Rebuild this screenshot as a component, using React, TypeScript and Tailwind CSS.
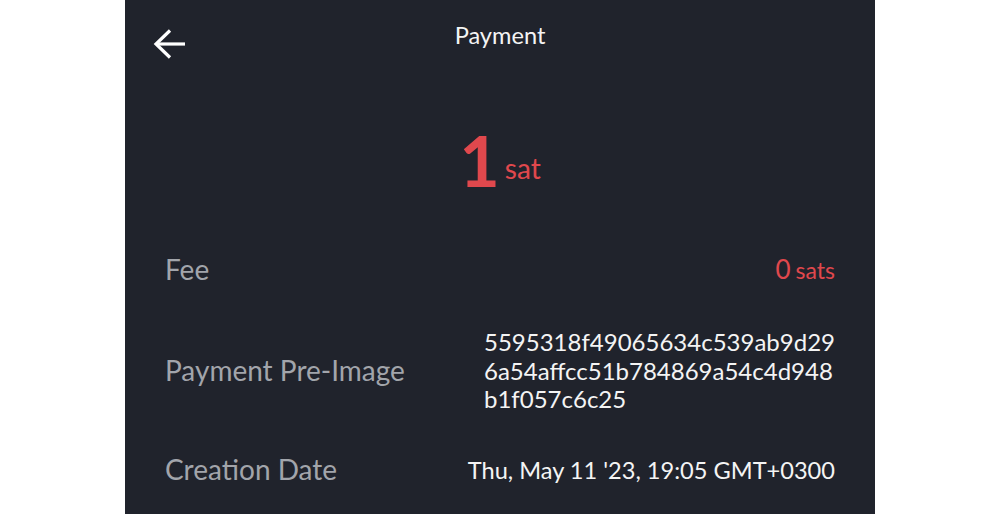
import React from "react";

const PREIMAGE = "5595318f49065634c539ab9d296a54affcc51b784869a54c4d948b1f057c6c25";

function BackArrow() {
  return (
    <svg width="32" height="30" viewBox="0 0 32 30" fill="none">
      <path d="M32 15H3" stroke="#fff" strokeWidth="3.2" />
      <path d="M17 1.5L3 15l14 13.5" stroke="#fff" strokeWidth="3.2" />
    </svg>
  );
}

function PaymentDetails() {
  return (
    <div className="min-h-screen bg-white font-['Lato',sans-serif]">
      <div className="mx-auto w-[750px] min-h-[514px] bg-[#20232c] text-[#f4f4f4]">
        {/* Header */}
        <div className="grid grid-cols-[1fr_auto_1fr] items-start px-[28px] pt-[21px]">
          <button className="mt-[8px] w-fit">
            <BackArrow />
          </button>
          <h1 className="text-[23.6px] leading-[1.2]">Payment</h1>
          <div />
        </div>

        {/* Amount */}
        <div className="mt-[66px] flex items-end justify-center text-[#e0484d]">
          <span className="text-[70px] font-bold leading-none">1</span>
          <span className="ml-[5px] mb-[13px] text-[28px] leading-none">sat</span>
        </div>

        {/* Rows */}
        <div className="mt-[55px] flex flex-col px-10">
          <div className="flex items-center justify-between">
            <span className="text-[28px] leading-[1.2] text-[#a2a5ab]">Fee</span>
            <span className="flex items-baseline text-[#e0484d]">
              <span className="text-[26px]">0</span>
              <span className="ml-[5px] text-[23px]">sats</span>
            </span>
          </div>

          <div className="mt-[39px] flex items-center justify-between">
            <span className="text-[28px] leading-[1.2] text-[#a2a5ab]">Payment Pre-Image</span>
            <span className="w-[354px] pl-[3px] break-all text-[24px] leading-[28.5px]">{PREIMAGE}</span>
          </div>

          <div className="mt-[39px] flex items-center justify-between">
            <span className="text-[28px] leading-[1.2] text-[#a2a5ab]">Creation Date</span>
            <span className="text-[23.6px]">Thu, May 11 '23, 19:05 GMT+0300</span>
          </div>
        </div>
      </div>
    </div>
  );
}

export default function App() {
  return <PaymentDetails />;
}
